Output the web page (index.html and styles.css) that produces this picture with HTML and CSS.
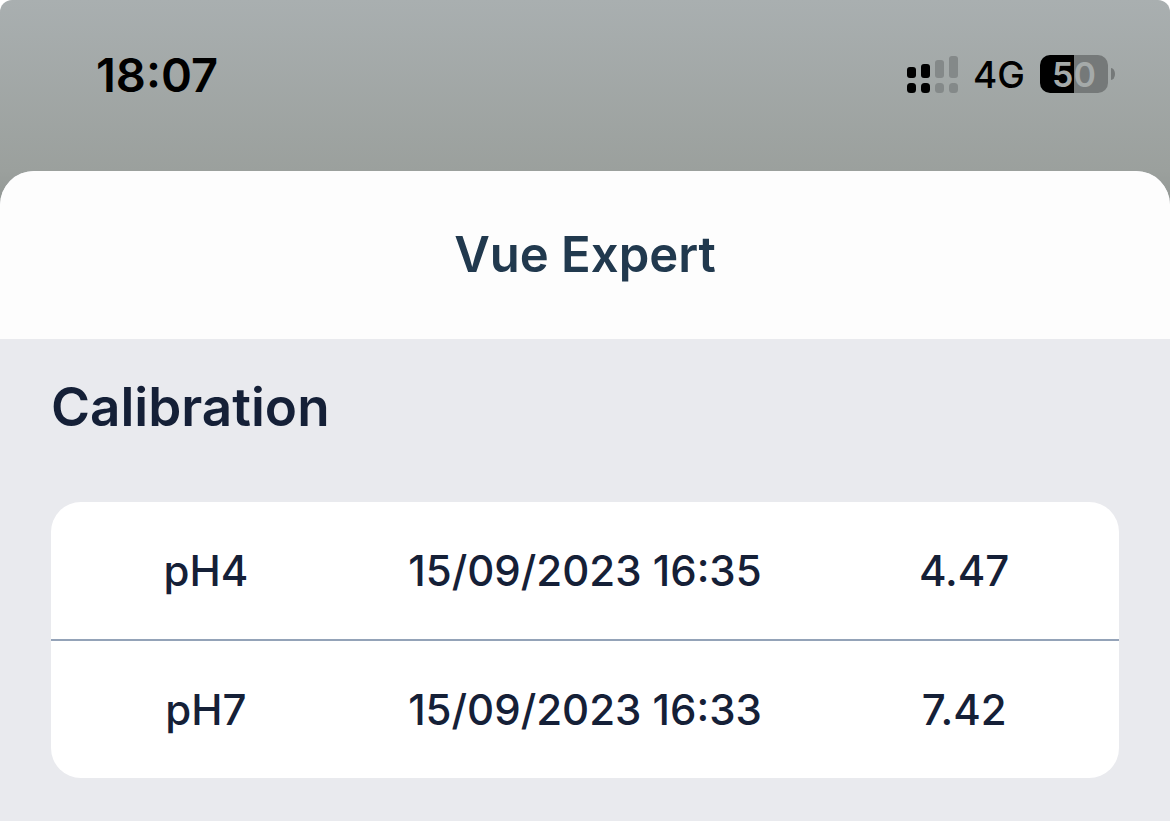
FILE: index.html
```html
<!DOCTYPE html>
<html lang="en">
<head>
    <meta charset="UTF-8">
    <meta name="viewport" content="width=device-width, initial-scale=1.0">
    <title>Vue Expert</title>
    <link rel="stylesheet" href="styles.css">
</head>
<body>

<div class="screen">
    <header class="status-bar">
        <time class="clock">18:07</time>
        <div class="status-icons">
            <svg class="signal" width="51" height="38" viewBox="0 0 51 38" aria-hidden="true">
                <g fill="#000">
                    <rect x="0" y="12" width="9" height="11" rx="3"/>
                    <rect x="14" y="9" width="9" height="14" rx="3"/>
                    <rect x="0" y="28" width="9" height="10" rx="3.5"/>
                    <rect x="14" y="28" width="9" height="10" rx="3.5"/>
                </g>
                <g fill="#848989">
                    <rect x="28" y="5" width="9" height="18" rx="3"/>
                    <rect x="42" y="1" width="9" height="22" rx="3"/>
                    <rect x="28" y="28" width="9" height="10" rx="3.5"/>
                    <rect x="42" y="28" width="9" height="10" rx="3.5"/>
                </g>
            </svg>
            <span class="network">4G</span>
            <div class="battery">
                <span class="battery-level">50</span>
                <span class="battery-tip"></span>
            </div>
        </div>
    </header>

    <main class="sheet">
        <h1 class="sheet-title">Vue Expert</h1>
        <section class="calibration">
            <h2>Calibration</h2>
            <div class="card">
                <table>
                    <tr>
                        <th scope="row">pH4</th>
                        <td>15/09/2023 16:35</td>
                        <td>4.47</td>
                    </tr>
                    <tr>
                        <th scope="row">pH7</th>
                        <td>15/09/2023 16:33</td>
                        <td>7.42</td>
                    </tr>
                </table>
            </div>
        </section>
    </main>
</div>

</body>
</html>
```

FILE: styles.css
```css
* {
    box-sizing: border-box;
}

body {
    font-family: Inter, "Liberation Sans", sans-serif;
    margin: 0;
    background-color: #fff;
    color: #152037;
}

/* Dimmed page behind the sheet */
.screen {
    display: flex;
    flex-direction: column;
    min-height: 100vh;
    border-radius: 12px 12px 0 0;
    background: linear-gradient(#a9afb0, #9ba09d 171px, #8b908d 230px);
}

.status-bar {
    display: flex;
    justify-content: space-between;
    align-items: center;
    height: 171px;
    padding: 0 55px 23px 96px;
    color: #000;
}

.clock {
    font-size: 47px;
    font-weight: 600;
}

.status-icons {
    display: flex;
    align-items: center;
    gap: 15px;
}

.network {
    font-size: 37px;
    font-weight: 500;
}

/* Battery */
.battery {
    display: flex;
    align-items: center;
    gap: 3px;
}

.battery-level {
    display: flex;
    justify-content: center;
    align-items: center;
    width: 68px;
    height: 38px;
    border-radius: 10px;
    background: linear-gradient(90deg, #000 50%, #757979 50%);
    color: #a5aaa9;
    font-size: 34px;
    font-weight: 600;
}

.battery-tip {
    width: 4px;
    height: 12px;
    border-radius: 0 4px 4px 0 / 0 6px 6px 0;
    background-color: #757979;
}

/* Sheet */
.sheet {
    flex: 1;
    border-radius: 34px 34px 0 0;
    background-color: #e9eaee;
    overflow: hidden;
}

.sheet-title {
    margin: 0;
    padding: 54px 0;
    background-color: #fdfdfd;
    color: #21394e;
    font-size: 49px;
    font-weight: 600;
    line-height: 60px;
    text-align: center;
}

.calibration {
    padding: 36px 51px 43px;
}

.calibration h2 {
    margin: 0 0 63px;
    font-size: 53px;
    font-weight: 600;
    line-height: 64px;
}

.card {
    border-radius: 30px;
    background-color: #fff;
    overflow: hidden;
}

.card table {
    width: 100%;
    border-collapse: collapse;
    table-layout: fixed;
    font-size: 42px;
    text-align: center;
}

.card th, .card td {
    height: 138px;
    padding: 0;
    font-weight: 500;
    white-space: nowrap;
}

.card th:first-child, .card td:last-child {
    width: 29%;
}

.card tr + tr {
    border-top: 2px solid #94a3b8;
}
```
